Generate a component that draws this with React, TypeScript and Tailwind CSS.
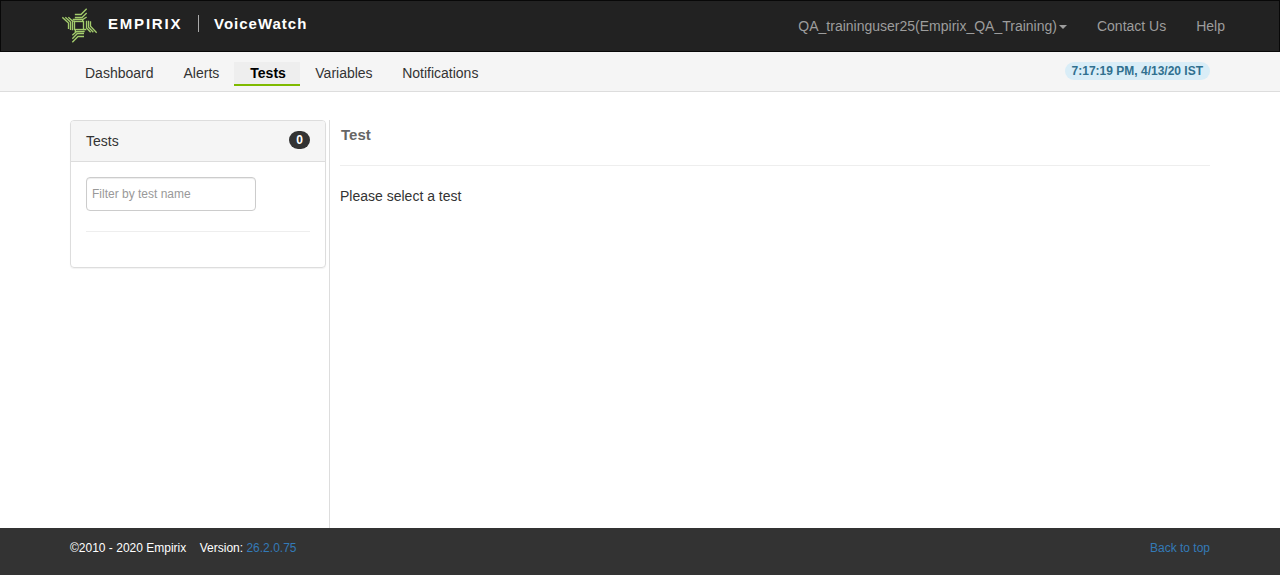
function Logo() {
  return (
    <svg width="36" height="36" viewBox="18 24 108 108" fill="none" stroke="#a3cc6c" strokeWidth="4" className="mt-[7px] shrink-0">
      <path d="M56.5 43.5H75L92 26M56.5 52.5H78L92 39M50 58.5H80L92 51" />
      <path d="M19 52L37.5 69V87M28 52L43.5 66V90M37 52L49.5 63V91" />
      <path d="M91.5 62V84L104 97M97.5 62V82L112 97M103.5 64V79L122 98" />
      <path d="M86 94.5H62L49 106M84 100.5H64L49 116M84 109.5H66L49 127" />
      <rect x="55.5" y="64.5" width="27" height="24" />
      <path d="M80 58V64M49 63.5H56M91 88.5H82M58 97V88" />
    </svg>
  );
}

export default function App() {
  return (
    <div className="flex h-[575px] w-full flex-col bg-white font-['Liberation_Sans',Arial,sans-serif] text-sm leading-5 text-[#333]">
      <header className="flex h-[52px] shrink-0 justify-between border border-[#080808] bg-[#222] pl-[61px] pr-[54px]">
        <div className="flex text-[15px] font-bold text-white">
          <Logo />
          <span className="ml-[10px] mt-[13px] w-[79px] tracking-[1.8px]">EMPIRIX</span>
          <span className="ml-[11px] mt-[14px] h-[17px] w-px bg-[#aaa]" />
          <span className="ml-[15px] mt-[13px] tracking-[1px]">VoiceWatch</span>
        </div>
        <nav className="flex pt-[15px] text-[#9d9d9d]">
          <a className="flex h-5 items-center">
            QA_traininguser25(Empirix_QA_Training)
            <span className="ml-[2px] mt-px border-x-4 border-t-4 border-x-transparent border-t-[#9d9d9d]" />
          </a>
          <a className="ml-[30px]">Contact Us</a>
          <a className="ml-[30px]">Help</a>
        </nav>
      </header>

      <div className="flex h-10 shrink-0 justify-between border-b border-[#ddd] bg-[#f5f5f5] px-[70px] pt-[10px]">
        <nav className="flex h-6">
          <a className="px-[15px] pt-px">Dashboard</a>
          <a className="px-[15px] pt-px">Alerts</a>
          <a className="w-[66px] border-b-2 border-[#7fba00] bg-[#eee] pl-4 pt-px font-bold text-black">Tests</a>
          <a className="pl-[15px] pr-[14.5px] pt-px">Variables</a>
          <a className="px-[15px] pt-px">Notifications</a>
        </nav>
        <span className="h-[18px] rounded-[9px] bg-[#d9edf7] px-[7px] text-xs font-bold leading-[18px] text-[#31708f]">7:17:19 PM, 4/13/20 IST</span>
      </div>

      <main className="flex flex-1 px-[70px] pt-7">
        <aside className="w-[256px]">
          <section className="h-[148px] rounded border border-[#ddd] shadow-[0_1px_1px_rgba(0,0,0,0.05)]">
            <div className="flex h-[41px] items-start justify-between rounded-t-[3px] border-b border-[#ddd] bg-[#f5f5f5] px-[15px] pt-[10px]">
              <span>Tests</span>
              <span className="h-[18px] w-[21px] rounded-full bg-[#333] text-center text-xs font-bold leading-[18px] text-white">0</span>
            </div>
            <div className="px-[15px] pt-[15px]">
              <input
                className="block h-[34px] w-[170px] rounded border border-[#ccc] bg-white px-[5px] text-xs shadow-[inset_0_1px_1px_rgba(0,0,0,0.075)] placeholder:text-[#999]"
                placeholder="Filter by test name"
              />
              <hr className="mt-5 border-[#eee]" />
            </div>
          </section>
        </aside>
        <section className="ml-[3px] flex-1 border-l border-[#ddd] pl-[10px]">
          <h1 className="h-[45px] pl-px pt-[5px] text-[15px] font-bold text-[#666]">Test</h1>
          <hr className="border-[#eee]" />
          <p className="mt-5">Please select a test</p>
        </section>
      </main>

      <footer className="flex h-[47px] shrink-0 justify-between bg-[#333] px-[70px] pt-[10px] text-xs leading-5 text-white">
        <div>
          <span>©2010 - 2020 Empirix</span>
          <span className="ml-[13.5px]">Version: <a className="text-[#337ab7]">26.2.0.75</a></span>
        </div>
        <a className="text-[#337ab7]">Back to top</a>
      </footer>
    </div>
  );
}
